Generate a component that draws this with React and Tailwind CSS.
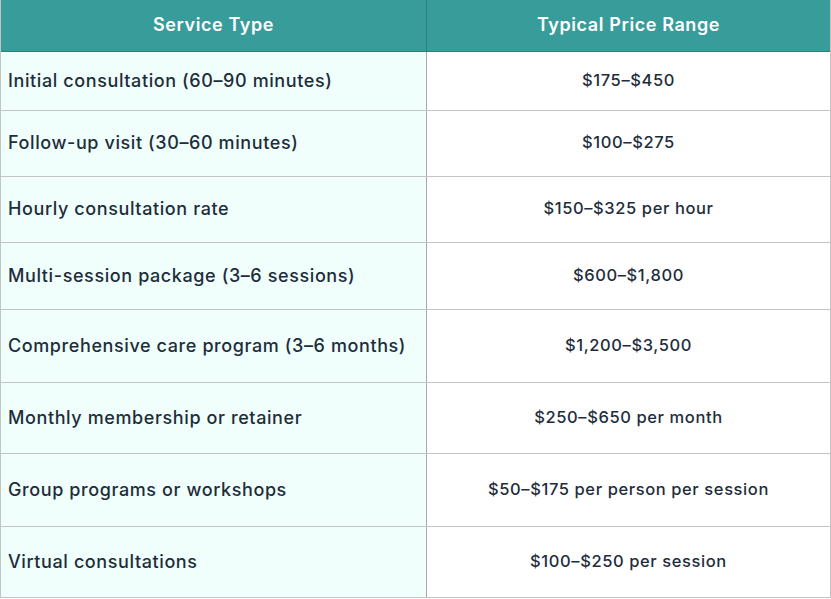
import React from 'react'

const rows = [
  { service: 'Initial consultation (60–90 minutes)', price: '$175–$450', h: 'h-[59px]' },
  { service: 'Follow-up visit (30–60 minutes)', price: '$100–$275', h: 'h-[66px]' },
  { service: 'Hourly consultation rate', price: '$150–$325 per hour', h: 'h-[66px]' },
  { service: 'Multi-session package (3–6 sessions)', price: '$600–$1,800', h: 'h-[67px]' },
  { service: 'Comprehensive care program (3–6 months)', price: '$1,200–$3,500', h: 'h-[73px]' },
  { service: 'Monthly membership or retainer', price: '$250–$650 per month', h: 'h-[71px]' },
  { service: 'Group programs or workshops', price: '$50–$175 per person per session', h: 'h-[73px]' },
  { service: 'Virtual consultations', price: '$100–$250 per session', h: 'h-[70px]' },
]

export default function App(){
  return (
    <div className="w-[831px] h-[599px] bg-white font-['Inter',sans-serif] text-[18px] tracking-[0.6px] text-[#1e2d3b]">
      <div className="w-[831px] border-r border-b border-l border-[#c4c4c4]">
        <div className="flex h-[52px] bg-[#389c9a] border-b border-[#2c7f7d] text-white font-semibold">
          <div className="w-[426px] shrink-0 flex items-center justify-center pb-[2px] border-r border-[#2c7f7d]">Service Type</div>
          <div className="flex-1 flex items-center justify-center pb-[2px]">Typical Price Range</div>
        </div>
        {rows.map((row, idx) => (
          <div
            key={row.service}
            className={`flex ${row.h} ${idx < rows.length - 1 ? 'border-b border-[#c4c4c4]' : ''}`}
          >
            <div className="w-[426px] shrink-0 flex items-center pl-[7px] pb-[2px] bg-[#f0fffc] border-r border-[#a8a8a8] font-medium">
              {row.service}
            </div>
            <div className="flex-1 flex items-center justify-center pb-[2px] text-[16.5px] tracking-[0.6px] font-medium">{row.price}</div>
          </div>
        ))}
      </div>
    </div>
  )
}
